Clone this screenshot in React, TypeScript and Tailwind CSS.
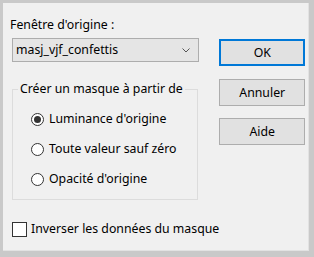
import { useState } from 'react';

const font = { fontFamily: '"Noto Sans", "Open Sans", sans-serif' };

const Radio = ({ checked, label, onClick }: { checked: boolean; label: string; onClick: () => void }) => (
  <button onClick={onClick} className="flex h-[30px] items-center gap-[5px] whitespace-nowrap text-left">
    <span className="flex h-[13px] w-[13px] items-center justify-center rounded-full border border-[#333333] bg-white">
      {checked && <span className="h-[7px] w-[7px] rounded-full bg-[#333333]" />}
    </span>
    <span>{label}</span>
  </button>
);

export default function App() {
  const [mode, setMode] = useState(0);
  const [invert, setInvert] = useState(false);
  const options = ["Luminance d'origine", 'Toute valeur sauf zéro', "Opacité d'origine"];

  return (
    <div className="h-[257px] w-[314px] bg-[#c9c9c9] pl-[3px] pt-[3px]" style={font}>
      <div className="flex h-[248px] w-[306px] border-r border-b border-[#e2e2e2] bg-[#f0f0f0] text-[12.3px] leading-[16px] text-black">
        <div className="flex flex-col pl-[7px] pt-[14px]">
          <span>Fenêtre d'origine :</span>

          <div className="ml-[2px] mt-[5px] flex h-[24px] w-[187px] items-center justify-between border border-[#adadad] bg-[#e5e5e5] pl-[3px] pr-[8px]">
            <span>masj_vjf_confettis</span>
            <svg width="8" height="5" viewBox="0 0 8 5" fill="none" stroke="#555" strokeWidth="1">
              <polyline points="0.5,0.5 4,4 7.5,0.5" />
            </svg>
          </div>

          <fieldset className="ml-[2px] mt-[19px] w-[186px] min-w-0 border border-[#dcdcdc] pb-[5px] pt-[7px]">
            <legend className="ml-[5px] whitespace-nowrap px-[2px]">Créer un masque à partir de</legend>
            <div className="flex flex-col pl-[18px]">
              {options.map((o, i) => (
                <Radio key={o} label={o} checked={mode === i} onClick={() => setMode(i)} />
              ))}
            </div>
          </fieldset>

          <button
            onClick={() => setInvert(!invert)}
            className="ml-[2px] mt-[21px] flex items-center gap-[4px] whitespace-nowrap text-left"
          >
            <span className="flex h-[15px] w-[15px] items-center justify-center border border-[#333333] bg-white text-[11px]">
              {invert ? '✓' : ''}
            </span>
            <span>Inverser les données du masque</span>
          </button>
        </div>

        <div className="ml-auto mr-[7px] flex flex-col pt-[36px]">
          <button className="h-[27px] w-[86px] border-2 border-[#0078d7] bg-[#e1e1e1]">OK</button>
          <button className="mt-[13px] h-[27px] w-[86px] border border-[#adadad] bg-[#e1e1e1]">Annuler</button>
          <button className="mt-[12px] h-[27px] w-[86px] border border-[#adadad] bg-[#e1e1e1]">Aide</button>
        </div>
      </div>
    </div>
  );
}
